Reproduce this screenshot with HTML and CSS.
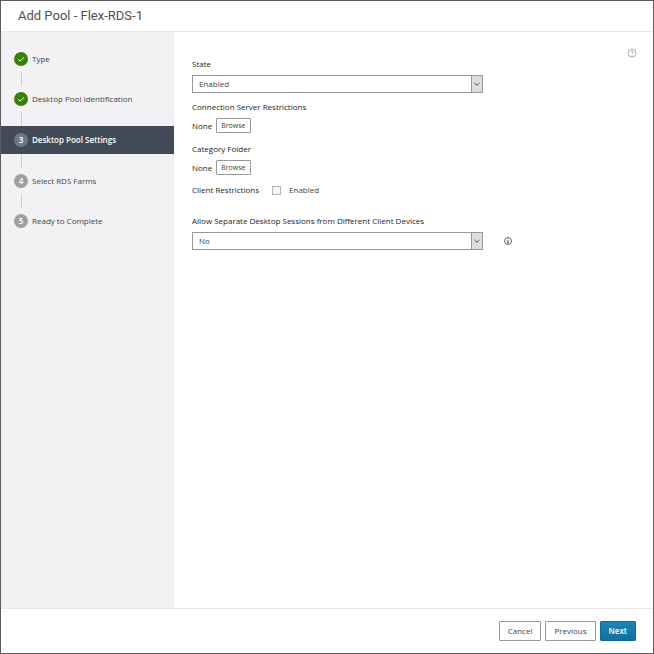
FILE: index.html
```
<!doctype html>
<html lang="en">

<head>
    <meta charset="utf-8">
    <title>Add Pool</title>
    <link rel="stylesheet" href="styles.css">
</head>

<body>

<div class="wizard">
    <header class="header">
        <h1>Add Pool - Flex-RDS-1</h1>
    </header>

    <div class="main">
        <nav class="sidebar">
            <ol class="steps">
                <li class="step">
                    <span class="badge done">
                        <svg viewBox="0 0 14 14"><path d="M4.2 7.4l2 1.8 3.8-4"/></svg>
                    </span>
                    <span>Type</span>
                </li>
                <li class="step">
                    <span class="badge done">
                        <svg viewBox="0 0 14 14"><path d="M4.2 7.4l2 1.8 3.8-4"/></svg>
                    </span>
                    <span>Desktop Pool Identification</span>
                </li>
                <li class="step active" aria-current="step">
                    <span class="badge">3</span>
                    <span>Desktop Pool Settings</span>
                </li>
                <li class="step">
                    <span class="badge">4</span>
                    <span>Select RDS Farms</span>
                </li>
                <li class="step">
                    <span class="badge">5</span>
                    <span>Ready to Complete</span>
                </li>
            </ol>
        </nav>

        <form class="content" id="settings">
            <button type="button" class="icon help" aria-label="Help">
                <svg viewBox="0 0 10 10"><circle cx="5" cy="5" r="4"/><path d="M3.7 4.1c0-1.7 2.6-1.7 2.6-.1 0 1-1.3 1-1.3 2M5 7v.8"/></svg>
            </button>

            <div class="field">
                <label class="title" for="state">State</label>
                <div class="select">
                    <select id="state">
                        <option>Enabled</option>
                        <option>Disabled</option>
                    </select>
                    <span class="arrow"><svg viewBox="0 0 8 8"><path d="M1.5 3L4 5.3 6.5 3"/></svg></span>
                </div>
            </div>

            <div class="field browse">
                <span class="title">Connection Server Restrictions</span>
                <div class="row">
                    <span class="title">None</span>
                    <button type="button" class="small">Browse</button>
                </div>
            </div>

            <div class="field browse">
                <span class="title">Category Folder</span>
                <div class="row">
                    <span class="title">None</span>
                    <button type="button" class="small">Browse</button>
                </div>
            </div>

            <div class="restrictions">
                <span class="title">Client Restrictions</span>
                <input type="checkbox" id="restrict">
                <label for="restrict">Enabled</label>
            </div>

            <div class="field">
                <label class="title" for="sessions">Allow Separate Desktop Sessions from Different Client Devices</label>
                <div class="row">
                    <div class="select">
                        <select id="sessions">
                            <option>No</option>
                            <option>Yes</option>
                        </select>
                        <span class="arrow"><svg viewBox="0 0 8 8"><path d="M1.5 3L4 5.3 6.5 3"/></svg></span>
                    </div>
                    <button type="button" class="icon info" aria-label="Information">
                        <svg viewBox="0 0 10 10"><circle cx="5" cy="5" r="3.5"/><path d="M5 2.5v1M4.2 4.5H5V7M4 7h2"/></svg>
                    </button>
                </div>
            </div>
        </form>
    </div>

    <footer class="footer">
        <button type="button">Cancel</button>
        <button type="button">Previous</button>
        <button type="submit" form="settings" class="primary">Next</button>
    </footer>
</div>

</body>

</html>
```
FILE: styles.css
```
* {
    box-sizing: border-box;
}

body {
    margin: 0;
    font-family: "Open Sans", "Noto Sans", sans-serif;
    font-size: 8px;
    line-height: 12px;
    color: #444;
    background: #fff;
}

.wizard {
    display: flex;
    flex-direction: column;
    min-height: 100vh;
    border: 1px solid #5c5c5e;
}

.header {
    padding: 5px 17px;
    border-bottom: 1px solid #e9e9eb;
}

h1 {
    margin: 0;
    font-family: Roboto, sans-serif;
    font-size: 13px;
    font-weight: normal;
    line-height: 20px;
    color: #505050;
}

.main {
    display: flex;
    flex: 1;
}

.sidebar {
    flex: 0 0 173px;
    background: #f2f2f4;
}

.steps {
    display: flex;
    flex-direction: column;
    gap: 14px;
    margin: 0;
    padding: 14px 0 0;
    list-style: none;
}

.step {
    position: relative;
    display: flex;
    align-items: center;
    gap: 4px;
    height: 26px;
    padding-left: 13px;
}

/* line between two steps */
.step + .step::before {
    content: "";
    position: absolute;
    left: 20px;
    top: -14px;
    width: 1px;
    height: 14px;
    background: #cfcfd2;
}

.step.active {
    height: 28px;
    color: #fff;
    background: #414b57;
    font-weight: 600;
}

.badge {
    display: flex;
    align-items: center;
    justify-content: center;
    width: 14px;
    height: 14px;
    border-radius: 50%;
    background: #a0a0a4;
    color: #fff;
    font-weight: 600;
}

.active .badge {
    background: #6c7884;
}

.badge.done {
    background: #37800a;
}

svg {
    display: block;
    fill: none;
    stroke: currentColor;
}

.badge svg {
    width: 14px;
    height: 14px;
}

.content {
    position: relative;
    flex: 1;
    padding: 26px 18px 18px;
}

.title {
    font-weight: 500;
    color: #1c1c1c;
}

.field > .title {
    display: block;
}

.row {
    display: flex;
    align-items: center;
}

.select {
    position: relative;
    flex: 0 1 291px;
    max-width: 291px;
}

.field > .select,
.field > .row {
    margin-top: 5px;
}

select {
    display: block;
    width: 100%;
    height: 18px;
    padding: 0 18px 0 6px;
    border: 1px solid #989898;
    border-radius: 0;
    appearance: none;
    background: #fff;
    font: inherit;
    color: inherit;
}

.arrow {
    position: absolute;
    top: 0;
    right: 0;
    display: flex;
    align-items: center;
    justify-content: center;
    width: 12px;
    height: 18px;
    border: 1px solid #989898;
    background: #dedede;
    pointer-events: none;
}

.arrow svg {
    width: 8px;
    height: 8px;
}

.browse {
    margin-top: 8px;
}

.browse + .browse {
    margin-top: 10px;
}

.browse .row {
    gap: 4px;
}

button {
    height: 20px;
    padding: 0 8px;
    border: 1px solid #989898;
    border-radius: 1px;
    background: #fff;
    font: inherit;
    color: inherit;
}

button.small {
    height: 15px;
    padding: 0 4px;
    font-size: 7px;
}

button.icon {
    height: 10px;
    padding: 0;
    border: 0;
    background: none;
}

.icon svg {
    width: 10px;
    height: 10px;
    stroke-width: 0.8;
}

.help {
    position: absolute;
    top: 16px;
    right: 16px;
    color: #999;
}

.info {
    margin-left: 20px;
}

.restrictions {
    display: flex;
    align-items: center;
    margin: 9px 0 19px;
}

input[type=checkbox] {
    width: 9px;
    height: 9px;
    margin: 0 8px 0 13px;
    border: 1px solid #b5b5b5;
    appearance: none;
    background: #f4f4f4;
}

input[type=checkbox]:checked {
    background: #1379a8;
}

.footer {
    display: flex;
    justify-content: flex-end;
    gap: 4px;
    padding: 12px 17px;
    border-top: 1px solid #e9e9eb;
}

button.primary {
    border-color: #0f6c98;
    background: linear-gradient(#1b86b5, #0f719f);
    color: #fff;
    font-weight: 600;
}
```
